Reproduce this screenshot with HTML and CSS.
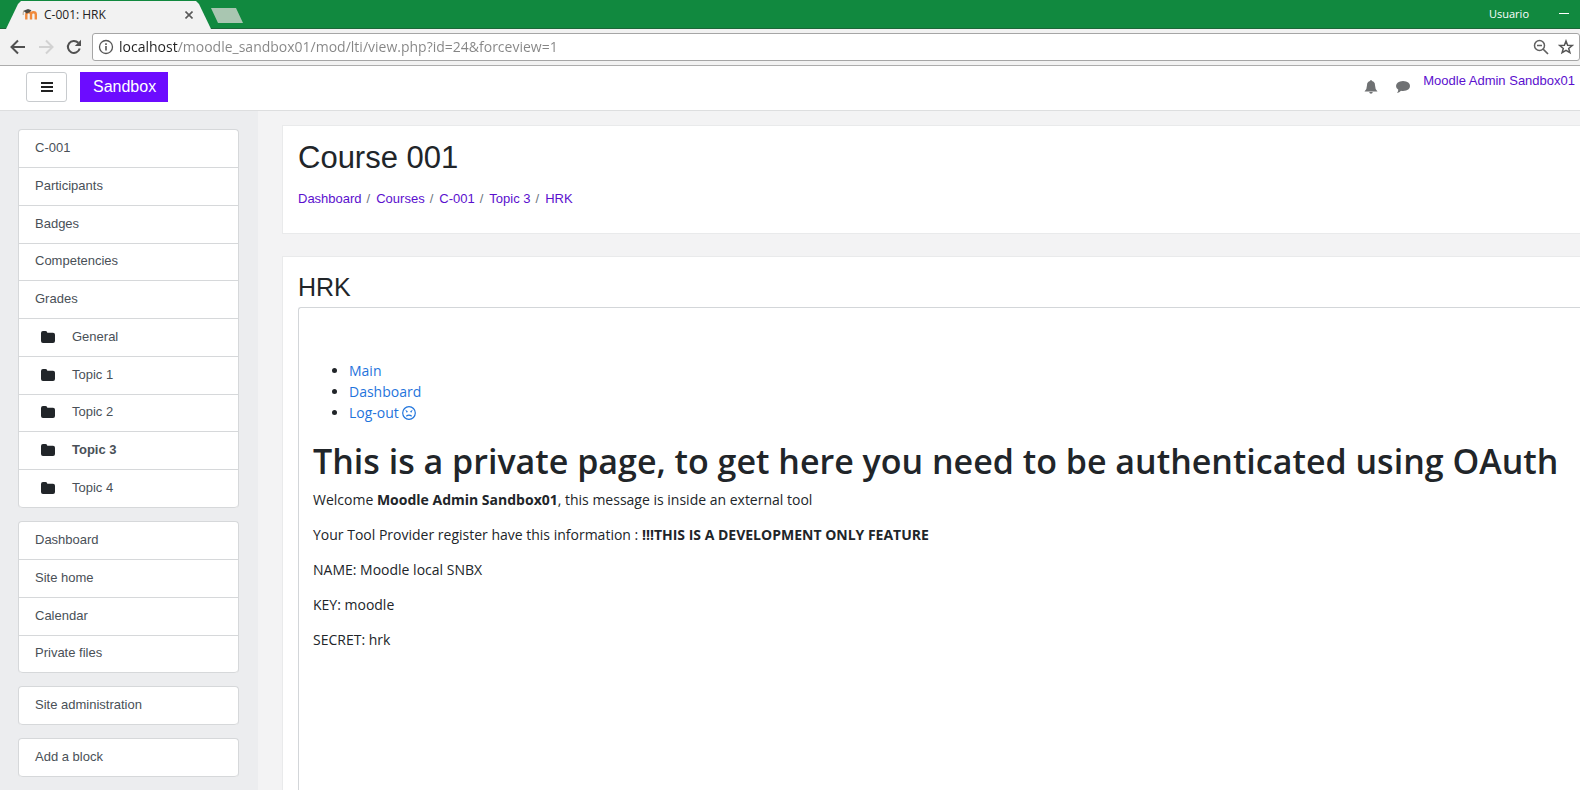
FILE: index.html
```html
<!DOCTYPE html>
<html lang="en">
<head>
<meta charset="utf-8">
<title>C-001: HRK</title>
<link rel="stylesheet" href="styles.css">
</head>
<body>
<svg class="sprite" aria-hidden="true">
  <symbol id="folder" viewBox="0 0 14 12"><path d="M0 2Q0 0 2 0H4.500Q6.300 0 6.300 1.800H12Q14 1.800 14 3.800V10Q14 12 12 12H2Q0 12 0 10Z"/></symbol>
</svg>
<div class="browser">
  <header class="titlebar">
    <div class="tab">
      <button class="tab-label" type="button">
        <svg class="favicon" viewBox="0 0 16 14" aria-hidden="true">
          <path d="M4.300 11.500V6.500Q4.300 4.300 6.700 4.300T9 6.500V11.500M9 6.500Q9 4.300 11.400 4.300T13.800 6.500V11.500" fill="none" stroke="#f08a3c" stroke-width="2.400"/>
          <path d="M1 3L6 1L9.500 2.300L7.500 4.500L4.500 5.500L3 4Z" fill="#4d4a45"/>
          <path d="M1.600 3.200Q1 5 1.200 7" fill="none" stroke="#b5a48f"/>
        </svg>
        C-001: HRK
      </button>
      <button class="tab-close" type="button" aria-label="Close tab"><svg viewBox="0 0 8 8"><path d="M.5 .5L7.500 7.500M7.500 .5L.5 7.500" fill="none" stroke="#5a5a5a" stroke-width="1.600"/></svg></button>
    </div>
    <button class="new-tab" type="button" aria-label="New tab"></button>
    <span class="profile">Usuario</span>
    <button class="minimize" type="button" aria-label="Minimize"></button>
  </header>

  <div class="toolbar">
    <div class="history">
      <button type="button" aria-label="Back"><svg viewBox="0 0 16 16"><path d="M15 8H2M8 1.500L1.500 8L8 14.500" fill="none" stroke="#505050" stroke-width="2"/></svg></button>
      <button type="button" aria-label="Forward" disabled><svg viewBox="0 0 16 16"><path d="M1 8H14M8 1.500L14.500 8L8 14.500" fill="none" stroke="#d2d2d2" stroke-width="2"/></svg></button>
      <button type="button" aria-label="Reload"><svg viewBox="0 0 16 16"><path d="M13.700 9.500A6 6 0 1 1 12.300 3.800" fill="none" stroke="#505050" stroke-width="2"/><path d="M15 .8V7H8.800Z" fill="#505050"/></svg></button>
    </div>
    <div class="omnibox">
      <svg class="info" viewBox="0 0 16 16" aria-hidden="true"><circle cx="8" cy="8" r="6.500" fill="none" stroke="#555" stroke-width="1.300"/><path d="M8 7V11.500M8 4.300V5.900" stroke="#555" stroke-width="1.600"/></svg>
      <input class="address" type="text" aria-label="Address" value="localhost/moodle_sandbox01/mod/lti/view.php?id=24&amp;forceview=1">
      <button type="button" aria-label="Zoom"><svg viewBox="0 0 16 16"><circle cx="6.500" cy="6.500" r="5" fill="none" stroke="#606060" stroke-width="1.500"/><path d="M4 6.500H9M10 10L15 15" fill="none" stroke="#606060" stroke-width="1.700"/></svg></button>
      <button type="button" aria-label="Bookmark"><svg viewBox="0 0 16 16"><path d="M8 2L9.600 6.200L14.200 6.500L10.700 9.400L11.900 13.700L8 11.300L4.100 13.700L5.300 9.400L1.800 6.500L6.400 6.200Z" fill="none" stroke="#555" stroke-width="1.500"/></svg></button>
    </div>
  </div>

  <div class="navbar">
    <button class="menu" type="button" aria-label="Side panel"><svg viewBox="0 0 12 10"><path d="M0 1H12M0 5H12M0 9H12" stroke="#222" stroke-width="2"/></svg></button>
    <a class="brand" href="#">Sandbox</a>
    <div class="user-tools">
      <button type="button" aria-label="Notifications"><svg width="14" height="14" viewBox="0 0 14 14"><path d="M7 0Q7.900 0 7.900 1.100Q11 1.800 11 5.300Q11 9.300 13.500 11.500H.5Q3 9.300 3 5.300Q3 1.800 6.100 1.100Q6.100 0 7 0ZM5.200 12H8.800Q8.500 13.800 7 13.800T5.200 12Z" fill="#6f7173"/></svg></button>
      <button type="button" aria-label="Messages"><svg width="14" height="12" viewBox="0 0 14 12"><path d="M7 0Q14 .3 14 5T7 10Q5.800 10 5 9.800Q3.500 11.600 1 12Q2.200 10.600 2.300 8.800Q0 7.400 0 5Q.3 .4 7 0Z" fill="#6f7173"/></svg></button>
    </div>
    <a class="user-name" href="#">Moodle Admin Sandbox01</a>
  </div>

  <div class="page">
    <nav class="drawer" aria-label="Side panel">
      <ul class="links">
        <li><a href="#">C-001</a></li>
        <li><a href="#">Participants</a></li>
        <li><a href="#">Badges</a></li>
        <li><a href="#">Competencies</a></li>
        <li><a href="#">Grades</a></li>
        <li><a class="topic" href="#"><svg><use href="#folder"/></svg>General</a></li>
        <li><a class="topic" href="#"><svg><use href="#folder"/></svg>Topic 1</a></li>
        <li><a class="topic" href="#"><svg><use href="#folder"/></svg>Topic 2</a></li>
        <li><a class="topic current" href="#"><svg><use href="#folder"/></svg>Topic 3</a></li>
        <li><a class="topic" href="#"><svg><use href="#folder"/></svg>Topic 4</a></li>
      </ul>
      <ul class="links">
        <li><a href="#">Dashboard</a></li>
        <li><a href="#">Site home</a></li>
        <li><a href="#">Calendar</a></li>
        <li><a href="#">Private files</a></li>
      </ul>
      <ul class="links">
        <li><a href="#">Site administration</a></li>
      </ul>
      <ul class="links">
        <li><a href="#">Add a block</a></li>
      </ul>
    </nav>

    <main class="content">
      <section class="card course">
        <h1>Course 001</h1>
        <ol class="breadcrumb">
          <li><a href="#">Dashboard</a></li>
          <li><a href="#">Courses</a></li>
          <li><a href="#">C-001</a></li>
          <li><a href="#">Topic 3</a></li>
          <li><a href="#">HRK</a></li>
        </ol>
      </section>
      <section class="card activity">
        <h2>HRK</h2>
        <div class="tool">
          <ul>
            <li><a href="#">Main</a></li>
            <li><a href="#">Dashboard</a></li>
            <li><a href="#">Log-out <svg class="frown" viewBox="0 0 14 14" aria-hidden="true"><circle cx="7" cy="7" r="6.300" fill="none" stroke="currentColor" stroke-width="1.200"/><path d="M4.300 10.300Q7 8 9.700 10.300" fill="none" stroke="currentColor" stroke-width="1.200"/><path d="M3.500 4.300L5.500 5.400M10.500 4.300L8.500 5.400" fill="none" stroke="currentColor" stroke-width=".8"/><circle cx="4.800" cy="5.700" r=".8" fill="currentColor"/><circle cx="9.200" cy="5.700" r=".8" fill="currentColor"/></svg></a></li>
          </ul>
          <h3>This is a private page, to get here you need to be authenticated using OAuth</h3>
          <p>Welcome <b>Moodle Admin Sandbox01</b>, this message is inside an external tool</p>
          <p>Your Tool Provider register have this information : <b>!!!THIS IS A DEVELOPMENT ONLY FEATURE</b></p>
          <p>NAME: Moodle local SNBX</p>
          <p>KEY: moodle</p>
          <p>SECRET: hrk</p>
        </div>
      </section>
    </main>
  </div>
</div>
</body>
</html>
```

FILE: styles.css
```css
* { box-sizing: border-box; }

body {
  margin: 0;
  font: 13px/20px "Liberation Sans", Arial, sans-serif;
  color: #212529;
}

a { color: #5b0fce; text-decoration: none; }
ul, ol { list-style: none; margin: 0; padding: 0; }

button {
  padding: 0;
  border: 0;
  background: none;
  font: inherit;
  color: inherit;
}

svg { display: block; }
.sprite { display: none; }

.browser {
  display: flex;
  flex-direction: column;
  min-height: 100vh;
}

/* Window frame */
.titlebar {
  display: flex;
  align-items: flex-start;
  height: 29px;
  padding: 1px 11px 0 6px;
  background: linear-gradient(#11893f 28px, #1c6638 28px);
  font: 12px/16px "Open Sans", "Noto Sans", sans-serif;
}

.tab {
  display: flex;
  align-items: center;
  justify-content: space-between;
  width: 205px;
  height: 28px;
  padding: 0 18px 0 16px;
  background: #f2f2f2;
  clip-path: polygon(0 100%, 12px 3px, 15px 0, 190px 0, 193px 3px, 100% 100%);
}

.tab-label { display: flex; align-items: center; gap: 6px; color: #222; }
.favicon { width: 16px; height: 14px; }
.tab-close svg { width: 8px; height: 8px; }

.new-tab {
  width: 32px;
  height: 15px;
  margin-top: 7px;
  background: #a9c6b1;
  clip-path: polygon(0 0, 25px 0, 100% 100%, 7px 100%);
}

.profile { margin: 5px 30px 0 auto; color: #fff; font-size: 11px; }
.minimize { width: 10px; height: 1px; margin-top: 12px; background: #fff; }

.toolbar {
  display: flex;
  gap: 10px;
  height: 37px;
  padding: 4px 0 4px 10px;
  border-bottom: 1px solid #adadad;
  background: #f2f2f2;
}

.history { display: flex; align-items: center; gap: 12px; }
.history svg, .omnibox svg { width: 16px; height: 16px; }

.omnibox {
  flex: 1;
  display: flex;
  align-items: center;
  gap: 9px;
  padding: 0 5px;
  border: 1px solid #a6a6a6;
  border-radius: 3px;
  background: #fff;
}

/* Host name reads darker than the rest of the address */
.address {
  flex: 1;
  margin-left: -4px;
  padding: 0;
  border: 0;
  outline: 0;
  background: linear-gradient(to right, #222 59px, #858585 59px);
  background-clip: text;
  -webkit-background-clip: text;
  color: transparent;
  font: 14px/20px "Open Sans", "Noto Sans", sans-serif;
}

/* Site header */
.navbar {
  display: flex;
  align-items: flex-start;
  gap: 13px;
  height: 45px;
  padding: 6px 5px 0 26px;
  border-bottom: 1px solid #dddedf;
  background: #fff;
}

.menu {
  display: flex;
  align-items: center;
  justify-content: center;
  width: 41px;
  height: 30px;
  border: 1px solid #c8cbce;
  border-radius: 3px;
}

.menu svg { width: 12px; height: 10px; }

.brand {
  padding: 0 12px 0 13px;
  background: #6c0cff;
  color: #fff;
  font-size: 16px;
  line-height: 30px;
}

.user-tools { display: flex; margin-left: auto; gap: 18px; }
.user-tools button { height: 30px; }
.user-name { line-height: 18px; }

/* Page body */
.page { flex: 1; display: flex; background: #f3f3f4; }

.drawer {
  display: flex;
  flex-direction: column;
  gap: 13px;
  flex: 0 0 258px;
  padding: 18px 19px 14px 18px;
  background: #ecedef;
}

.links {
  display: grid;
  grid-auto-rows: 38px 38px 38px 37px;
  border: 1px solid #d6d8da;
  border-bottom: 0;
  border-radius: 4px;
  background: #fff;
}

.links li { border-bottom: 1px solid #d6d8da; }
.links li:last-child { border-radius: 0 0 4px 4px; }

.links a {
  display: flex;
  align-items: center;
  height: 100%;
  padding: 0 16px 2px;
  color: #495057;
}

.links .topic { gap: 17px; padding-left: 22px; }
.topic svg { width: 14px; height: 12px; fill: #212529; }
.links .current { font-weight: bold; }

.content {
  flex: 1;
  min-width: 0;
  display: flex;
  flex-direction: column;
  gap: 22px;
  padding: 14px 0 0 24px;
}

.card {
  padding: 15px 0 0 15px;
  border: 1px solid #e9eaeb;
  border-right: 0;
  background: #fff;
}

h1, h2, h3 { margin: 0; font-weight: normal; }
h1 { font-size: 31px; line-height: 34px; }
h2 { font-size: 25px; line-height: 30px; }

.course { padding-bottom: 24px; }
.breadcrumb { display: flex; margin-top: 14px; }
.breadcrumb li + li::before { content: "/"; padding: 0 6px 0 5px; color: #6c757d; }

.activity { flex: 1; display: flex; flex-direction: column; border-bottom: 0; }

/* Embedded external tool */
.tool {
  flex: 1;
  margin-top: 5px;
  padding: 52px 0 0 14px;
  border: 1px solid #d3d6d9;
  border-width: 1px 0 0 1px;
  border-radius: 3px 0 0 0;
  font: 14px/21px "Open Sans", "Noto Sans", sans-serif;
}

.tool a { color: #1f74dc; }
.tool ul { list-style: disc; padding-left: 36px; }
.tool h3 { margin: 17px 0 6px; font-size: 34px; line-height: 43px; font-weight: 600; }
.tool p { margin: 0 0 14px; }
.frown { display: inline-block; width: 14px; height: 14px; vertical-align: -2px; }
```
